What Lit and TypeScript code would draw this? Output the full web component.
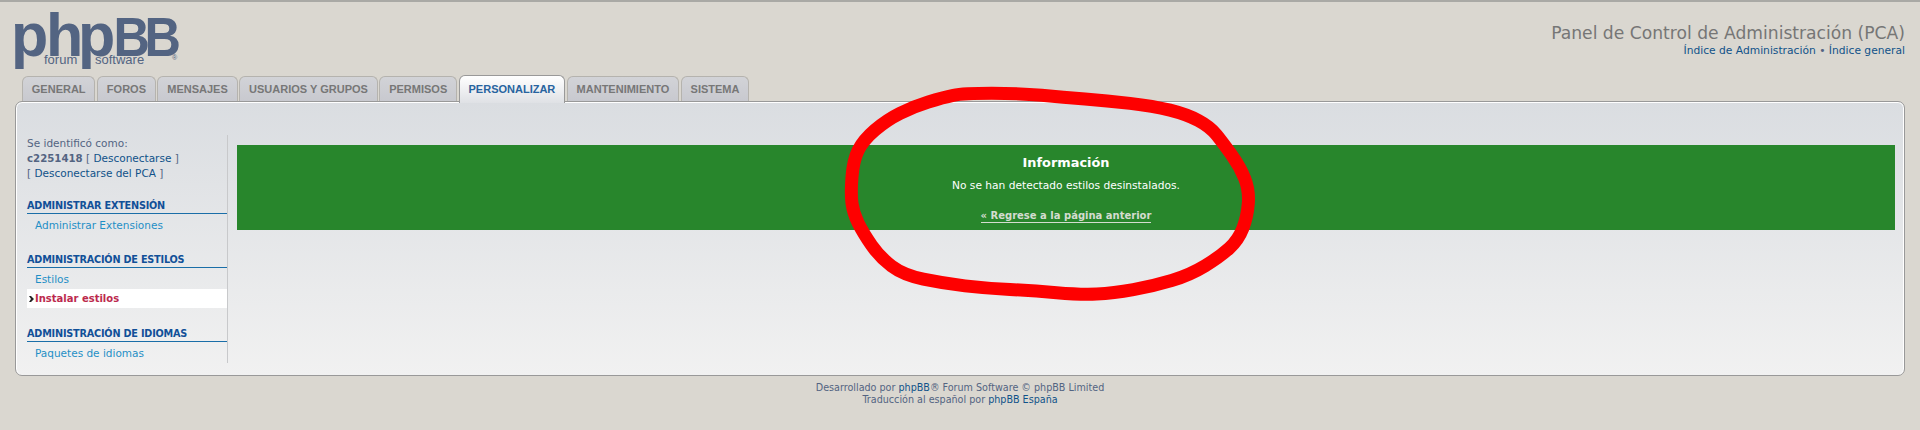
import { LitElement, html, css, svg } from "lit";
import { customElement } from "lit/decorators.js";

const pts: [number, number][] = [
  [430,40],[600,40],[730,52],[860,62],[1000,78],[1100,103],[1170,140],[1210,190],[1260,260],[1288,330],[1282,410],[1255,480],[1200,530],[1110,585],[1000,618],[880,640],[780,644],[640,632],[500,625],[370,610],[250,585],[180,532],[130,460],[100,400],[92,340],[100,240],[130,180],[200,120],[280,80],[370,52],
].map(([x, y]) => [820 + x / 3, 80 + y / 3] as [number, number]);

function loop(p: [number, number][]) {
  const mid = (a: [number, number], b: [number, number]) => [(a[0] + b[0]) / 2, (a[1] + b[1]) / 2];
  const s = mid(p[p.length - 1], p[0]);
  let d = `M${s[0]} ${s[1]}`;
  p.forEach((c, i) => {
    const m = mid(c, p[(i + 1) % p.length]);
    d += `Q${c[0]} ${c[1]} ${m[0]} ${m[1]}`;
  });
  return d + "Z";
}

@customElement("app-root")
export class AppRoot extends LitElement {
  static styles = css`
    :host { display: block; position: relative; width: 1920px; height: 430px; overflow: hidden; background: #dad7d0; border-top: 2px solid #a9a9a5; box-sizing: border-box; font-family: "DejaVu Sans", Verdana, sans-serif; font-size: 10.5px; color: #536482; }
    a { color: #105289; text-decoration: none; }
    .wrap { padding: 0 15px; }
    .head { display: flex; justify-content: space-between; height: 73px; }
    .logo { display: block; margin-left: -15px; overflow: visible; }
    .logo .big { font-family: "Liberation Sans", sans-serif; font-weight: 700; fill: #536482; }
    .logo .small { font-family: "Liberation Sans", sans-serif; fill: #536482; font-size: 13px; }
    .title { text-align: right; padding-top: 20px; }
    .title h1 { margin: 0; font-weight: 400; font-size: 17.15px; line-height: 22px; color: #767676; }
    .title p { margin: 0; line-height: 14px; font-size: 10.7px; }
    .tabs { display: flex; gap: 1.7px; padding-left: 7px; height: 26px; align-items: flex-end; position: relative; z-index: 1; }
    .tab { box-sizing: border-box; height: 25px; padding: 0 8.8px; display: flex; align-items: center; font-family: "Liberation Sans", Arial, sans-serif; font-weight: 700; font-size: 11px; color: #777; background: linear-gradient(#d2d3d7, #c8c9cf); border: 1px solid #b5b3ae; border-bottom: none; border-radius: 6px 6px 0 0; }
    .tab.on { height: 28px; margin-bottom: -2px; color: #28649f; background: linear-gradient(#fff 0, #dfe1e5 100%); border-color: #999; position: relative; padding: 0 8.8px 2px; }
    .panel { box-sizing: border-box; height: 275px; border: 1px solid #999; box-shadow: inset 0 1px 0 #fff, inset 1px 0 0 #fff, inset -1px 0 0 #fff; border-radius: 7px; background: linear-gradient(#dadde1, #f1f1f1); padding: 33px 9px 12px 11px; display: flex; gap: 9px; }
    .side { width: 201px; border-right: 1px solid #c8c9cb; box-sizing: border-box; flex: none; }
    .who { line-height: 15px; padding-top: 1px; }
    .who b { font-weight: 700; font-size: 10.2px; color: #536482; }
    .sec { margin: 17px 0 0; }
    .sec.last { margin-top: 18px; }
    .sec h3 { margin: 0; font-size: 9.7px; letter-spacing: -0.2px; line-height: 15px; font-weight: 700; color: #115098; border-bottom: 1px solid #1a6ea8; width: 200px; }
    .sec ul { list-style: none; margin: 2px 0 0; padding: 0; }
    .sec li { height: 19px; line-height: 19px; padding-left: 8px; color: #1f8fc6; position: relative; }
    .sec li.on { background: #fff; color: #bc2a4d; font-weight: 700; font-size: 10px; line-height: 20px; width: 200px; box-sizing: border-box; }
    .arrow { position: absolute; left: 2px; top: 7px; }
    .main { flex: 1; padding-top: 10px; }
    .ok { box-sizing: border-box; height: 85px; background: #28862c; color: #fff; text-align: center; padding-top: 9px; }
    .ok h2 { margin: 0; font-size: 12.9px; line-height: 18px; font-weight: 700; }
    .ok p { margin: 7px 0 0; font-size: 10.65px; line-height: 14px; }
    .ok a { display: inline-block; margin-top: 17px; font-size: 10px; line-height: 12px; font-weight: 700; color: #d4dcd0; border-bottom: 1px solid #d4dcd0; }
    .foot { text-align: center; font-size: 9.6px; line-height: 12.5px; padding-top: 5.5px; }
    .scribble { position: absolute; left: 0; top: -2px; pointer-events: none; z-index: 2; }
  `;

  render() {
    return html`
      <div class="wrap">
        <div class="head">
          <svg class="logo" width="190" height="73" viewBox="0 0 190 73" role="img" aria-label="phpBB forum software">
            <text class="big" font-size="61" x="11" y="53.5">p</text>
            <text class="big" font-size="61" x="46" y="53.5">h</text>
            <text class="big" font-size="61" x="78" y="53.5">p</text>
            <text class="big" font-size="56" transform="translate(113.5 53.5) scale(.9 1)">B</text>
            <text class="big" font-size="56" transform="translate(144.5 53.5) scale(.9 1)">B</text>
            <text class="small" x="44" y="62">forum</text>
            <text class="small" x="95" y="62">software</text>
            <text x="172" y="58" font-size="7" fill="#536482" font-family="Liberation Sans">®</text>
          </svg>
          <div class="title">
            <h1>Panel de Control de Administración (PCA)</h1>
            <p><a href="#">Índice de Administración</a> • <a href="#">Índice general</a></p>
          </div>
        </div>
        <div class="tabs">
          ${["GENERAL","FOROS","MENSAJES","USUARIOS Y GRUPOS","PERMISOS","PERSONALIZAR","MANTENIMIENTO","SISTEMA"].map(t => html`<div class="tab ${t === "PERSONALIZAR" ? "on" : ""}">${t}</div>`)}
        </div>
        <div class="panel">
          <div class="side">
            <div class="who">Se identificó como:<br><b>c2251418</b> [ <a href="#">Desconectarse</a> ]<br>[ <a href="#">Desconectarse del PCA</a> ]</div>
            <div class="sec"><h3>ADMINISTRAR EXTENSIÓN</h3><ul><li>Administrar Extensiones</li></ul></div>
            <div class="sec"><h3>ADMINISTRACIÓN DE ESTILOS</h3><ul><li>Estilos</li><li class="on"><svg class="arrow" width="5" height="6" viewBox="0 0 5 6"><path d="M0 0h2l3 3-3 3H0l2-3z" fill="#222"/></svg>Instalar estilos</li></ul></div>
            <div class="sec last"><h3>ADMINISTRACIÓN DE IDIOMAS</h3><ul><li>Paquetes de idiomas</li></ul></div>
          </div>
          <div class="main">
            <div class="ok">
              <h2>Información</h2>
              <p>No se han detectado estilos desinstalados.</p>
              <a href="#">« Regrese a la página anterior</a>
            </div>
          </div>
        </div>
        <div class="foot">Desarrollado por <a href="#">phpBB</a>® Forum Software © phpBB Limited<br>Traducción al español por <a href="#">phpBB España</a></div>
      </div>
      <svg class="scribble" width="1920" height="430" viewBox="0 0 1920 430">
        ${svg`<path d=${loop(pts)} fill="none" stroke="#fe0000" stroke-width="13" stroke-linejoin="round"/>`}
      </svg>
    `;
  }
}
